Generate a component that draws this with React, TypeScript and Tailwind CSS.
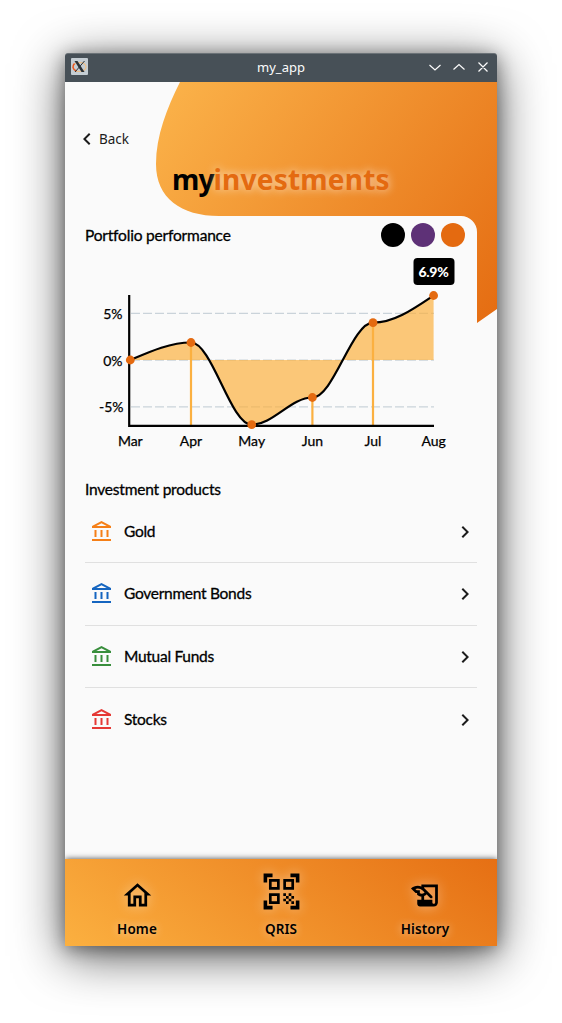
import type { ReactNode } from "react";
import {
  MdOutlineAccountBalance,
  MdOutlineHistoryEdu,
  MdOutlineHome,
  MdQrCodeScanner,
  MdChevronLeft,
  MdChevronRight,
} from "react-icons/md";

const products = [
  { name: "Gold", color: "text-[#f57f17]" },
  { name: "Government Bonds", color: "text-[#1565c0]" },
  { name: "Mutual Funds", color: "text-[#388e3c]" },
  { name: "Stocks", color: "text-[#e53935]" },
];

const points = [
  { month: "Mar", x: 65.3, y: 105 },
  { month: "Apr", x: 126, y: 87.5 },
  { month: "May", x: 186.7, y: 169.7 },
  { month: "Jun", x: 247.4, y: 142.5 },
  { month: "Jul", x: 308, y: 67.7 },
  { month: "Aug", x: 368.6, y: 40.5 },
];

const curve =
  "M65.300 105C85 96.5 105 87.5 126 87.5C147 87.5 165.500 169.700 186.700 169.700C208 169.700 226 142.500 247.400 142.500C268.500 142.500 287 67.700 308 67.700C329 67.700 348.500 54 368.600 40.500";

function TitleBar() {
  return (
    <div className="grid h-[29px] shrink-0 grid-cols-[1fr_auto_1fr] items-center rounded-t-[3px] border-t border-[#6b7277] bg-[#475057] pr-[7px] pl-[6px]">
      <svg className="-mt-[3px] h-[17px] w-[17px]" viewBox="0 0 17 17">
        <rect width="17" height="17" rx="1" fill="#c5cdd3" />
        <ellipse cx="8.500" cy="9" rx="6.500" ry="4.500" fill="none" stroke="#eec089" strokeWidth="1.200" />
        <path d="M3.500 5.500C1 8 1.500 11.500 5.500 13" fill="none" stroke="#e8531f" strokeWidth="1.500" />
        <path d="M3.500 3h3l7 11h-3z" fill="#2b3136" />
        <path d="M13.500 3L4 14" stroke="#2b3136" strokeWidth="1" />
      </svg>
      <span className="-mt-[2px] pl-px font-['Noto_Sans'] text-[13px] leading-none text-[#fcfcfc]">my_app</span>
      <svg className="-mt-[2px] h-[16px] w-[62px] justify-self-end" viewBox="0 0 62 16" fill="none" stroke="#fcfcfc" strokeWidth="1.200">
        <path d="M1.500 6L7 11L12.500 6M25.500 10.500L31 5.500L36.500 10.500M50.500 3.500L59.500 12.500M59.500 3.500L50.500 12.500" />
      </svg>
    </div>
  );
}

function Backdrop() {
  return (
    <svg className="absolute top-0 left-0 h-[242px] w-[432px]" viewBox="0 0 432 242">
      <defs>
        <linearGradient id="warm" gradientUnits="userSpaceOnUse" x1="100" y1="0" x2="440" y2="250">
          <stop offset="0" stopColor="#fbb34a" />
          <stop offset="1" stopColor="#e46a10" />
        </linearGradient>
      </defs>
      <path
        d="M115 0C102 26 91 54 91 82C91 116 116 134 154 134H396A16 16 0 0 1 412 150V241L432 227V0Z"
        fill="url(#warm)"
      />
    </svg>
  );
}

function Chart() {
  return (
    <svg className="mt-[5px] h-[200px] w-[432px] shrink-0 font-[Lato]" viewBox="0 0 432 200">
      <g stroke="#cad3da" strokeWidth="1.300" strokeDasharray="9 3">
        <path d="M66 58.400H369M66 105.200H369M66 151.800H369" />
      </g>
      <path d={curve + "V105H65.300Z"} fill="#fbb040" fillOpacity="0.7" />
      <path d="M126 88V170M247.400 143V170M308 68V170" stroke="#fbb040" strokeWidth="2.200" />
      <path d="M64.200 40V170.800H369" fill="none" stroke="#000" strokeWidth="2.200" />
      <path d={curve} fill="none" stroke="#000" strokeWidth="2.200" />
      {points.map((p) => (
        <circle key={p.month} cx={p.x} cy={p.y} r="4.400" fill="#e46a10" />
      ))}
      <g fontSize="14" stroke="#000" strokeWidth="0.250">
        {points.map((p) => (
          <text key={p.month} x={p.x} y="190.500" textAnchor="middle">
            {p.month}
          </text>
        ))}
        <text x="57.500" y="63.500" textAnchor="end">5%</text>
        <text x="57.500" y="110.500" textAnchor="end">0%</text>
        <text x="58.500" y="156.500" textAnchor="end">-5%</text>
      </g>
      <rect x="348.500" y="3" width="41" height="27" rx="4" />
      <text x="368.500" y="21.500" textAnchor="middle" fontSize="14" letterSpacing="-0.300" fontWeight="900" fill="#fff">
        6.9%
      </text>
    </svg>
  );
}

function NavItem({ label, children }: { label: string; children: ReactNode }) {
  return (
    <div className="flex flex-1 flex-col items-center">
      <div className="flex h-[48px] items-center [filter:drop-shadow(0_0_6px_rgba(255,255,255,0.5))]">{children}</div>
      <span className="font-['Noto_Sans'] text-[13.500px] leading-[20px] font-semibold tracking-[0.1px] [text-shadow:0_0_9px_rgba(255,255,255,0.6)]">
        {label}
      </span>
    </div>
  );
}

export default function App() {
  return (
    <div className="h-[1023px] w-[562px] overflow-hidden bg-white pt-[53px] pl-[65px]">
      <div className="flex h-[893px] w-[432px] flex-col rounded-t-[3px] text-black shadow-[0_10px_50px_rgba(0,0,0,0.65),0_3px_18px_rgba(0,0,0,0.4)]">
        <TitleBar />
        <main className="relative flex min-h-0 flex-1 flex-col bg-[#fafafa] font-[Lato]">
          <Backdrop />
          <div className="relative flex h-[134px] flex-col">
            <div className="mt-[47px] flex h-[20px] items-center pl-[10px]">
              <MdChevronLeft size={24} className="text-[#1c1c1c]" />
              <span className="font-['Noto_Sans'] text-[13.500px] text-[#1c1c1c]">Back</span>
            </div>
            <h1 className="mt-[11px] pl-[107px] font-['Noto_Sans'] text-[28px] leading-[38px] font-bold whitespace-nowrap">
              <span className="tracking-[-0.9px]">my</span>
              <span className="tracking-[0.22px] text-[#e46a10] [text-shadow:0_0_10px_rgba(255,255,255,0.75)]">
                investments
              </span>
            </h1>
          </div>
          <div className="relative flex h-[39px] shrink-0 items-center justify-between pr-[32px] pl-[20px]">
            <h2 className="text-[15.500px] font-normal tracking-[-0.19px] [-webkit-text-stroke:0.3px_#000]">
              Portfolio performance
            </h2>
            <div className="-mt-[2px] flex gap-[6px]">
              <span className="size-[24px] rounded-full bg-black" />
              <span className="size-[24px] rounded-full bg-[#5e3177]" />
              <span className="size-[24px] rounded-full bg-[#e46a10]" />
            </div>
          </div>
          <div className="relative -mt-[5px] flex">
            <Chart />
          </div>
          <h2 className="mt-[24px] pl-[20px] text-[15.500px] leading-[20px] font-normal tracking-[-0.21px] [-webkit-text-stroke:0.3px_#000]">
            Investment products
          </h2>
          <ul className="mx-[20px] mt-[1.800px] flex flex-1 flex-col">
            {products.map((p, i) => (
              <li
                key={p.name}
                className={
                  i < 3
                    ? "flex h-[62.500px] shrink-0 items-center border-b border-[#e0e0e0] pl-[5px]"
                    : "flex h-[62.500px] shrink-0 items-center pl-[5px]"
                }
              >
                <MdOutlineAccountBalance size={24} className={p.color} />
                <span className="ml-[10px] flex-1 text-[15.500px] tracking-[-0.28px] [-webkit-text-stroke:0.3px_#000]">
                  {p.name}
                </span>
                <MdChevronRight size={24} className="text-[#1c1c1c]" />
              </li>
            ))}
          </ul>
          <nav className="flex h-[87px] shrink-0 bg-[linear-gradient(38deg,#fbb040,#e46a10_108%)] pt-[12px] shadow-[0_0_6px_rgba(0,0,0,0.7)] [clip-path:inset(-8px_0_0_0)]">
            <NavItem label="Home">
              <MdOutlineHome size={33} />
            </NavItem>
            <NavItem label="QRIS">
              <MdQrCodeScanner size={43} className="mb-[7px]" />
            </NavItem>
            <NavItem label="History">
              <MdOutlineHistoryEdu size={33} />
            </NavItem>
          </nav>
        </main>
      </div>
    </div>
  );
}
